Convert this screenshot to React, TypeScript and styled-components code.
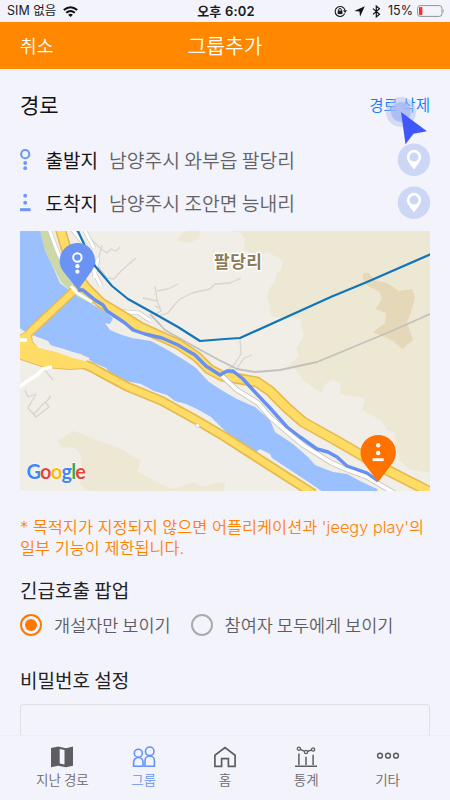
import React from "react";
import styled, { createGlobalStyle } from "styled-components";

const GlobalStyle = createGlobalStyle`
  * { box-sizing: border-box; }
  body { margin: 0; background: #f3f3fb; font-family: "Noto Sans CJK KR", "Noto Sans", sans-serif; }
  svg { display: block; flex: none; }
`;

const Screen = styled.div`
  position: relative;
  width: 450px;
  height: 800px;
  overflow: hidden;
  display: flex;
  flex-direction: column;
  background: #f3f3fb;
`;

const StatusBar = styled.div`
  height: 22px;
  flex: none;
  display: grid;
  grid-template-columns: 1fr auto 1fr;
  align-items: center;
  padding: 0 5px 0 7px;
  font-family: Inter, "Noto Sans CJK KR", sans-serif;
  font-size: 12.5px;
  line-height: 22px;
  color: #1b1b1f;
`;

const StatusGroup = styled.div<{ $end?: boolean; $gap: number }>`
  display: flex;
  align-items: center;
  justify-content: ${(p) => (p.$end ? "flex-end" : "flex-start")};
  gap: ${(p) => p.$gap}px;
`;

const Clock = styled.span`
  font-weight: 600;
  font-size: 13px;
  letter-spacing: 0.2px;
`;

const Header = styled.header`
  height: 47px;
  flex: none;
  display: grid;
  grid-template-columns: 1fr auto 1fr;
  align-items: center;
  padding: 0 20px 2px;
  background: #ff8800;
  color: #fff;
`;

const Cancel = styled.span`
  font-size: 18.2px;
  font-weight: 350;
  line-height: 24px;
`;

const Title = styled.h1`
  margin: 0;
  font-size: 20.4px;
  font-weight: 350;
  line-height: 24px;
`;

const Content = styled.main`
  flex: 1;
  min-height: 0;
  overflow: hidden;
  padding: 0 20px;
  display: flex;
  flex-direction: column;
`;

const SectionHead = styled.div`
  height: 69px;
  flex: none;
  display: flex;
  align-items: center;
  justify-content: space-between;
`;

const SectionTitle = styled.h2`
  margin: 0;
  font-size: 21px;
  font-weight: 400;
  line-height: 30px;
  color: #111;
`;

const DeleteLink = styled.span`
  font-size: 15.6px;
  font-weight: 350;
  line-height: 22px;
  padding-top: 1px;
  color: #0a7cff;
`;

const PlaceRow = styled.div`
  height: 43px;
  flex: none;
  display: flex;
  align-items: center;
`;

const PlaceIcon = styled.div`
  width: 25.5px;
`;

const PlaceKind = styled.span`
  width: 63.5px;
  font-size: 19px;
  line-height: 28px;
  color: #151515;
`;

const PlaceName = styled.span`
  flex: 1;
  font-size: 19.3px;
  font-weight: 350;
  line-height: 28px;
  color: #626266;
`;

const MapFrame = styled.div`
  margin-top: 7px;
  flex: none;
  width: 410px;
  height: 260px;
  overflow: hidden;
`;

const Note = styled.p`
  margin: 26px 0 0;
  font-family: Inter, "Noto Sans CJK KR", sans-serif;
  font-size: 16.35px;
  font-weight: 350;
  line-height: 21px;
  color: #ff8200;
  white-space: nowrap;
`;

const FieldTitle = styled.h3<{ $top: number }>`
  margin: ${(p) => p.$top}px 0 0;
  font-size: 19px;
  font-weight: 400;
  line-height: 30px;
  color: #222;
`;

const RadioRow = styled.div`
  display: flex;
  gap: 20px;
  margin-top: 7px;
  height: 30px;
  align-items: center;
`;

const RadioOption = styled.div`
  display: flex;
  align-items: center;
  gap: 12px;
  font-size: 17.5px;
  font-weight: 350;
  line-height: 26px;
  color: #5e5e62;
`;

const RadioMark = styled.span<{ $on?: boolean }>`
  width: 22px;
  height: 22px;
  border-radius: 50%;
  border: 2px solid ${(p) => (p.$on ? "#ff7800" : "#aaaaad")};
  display: grid;
  place-items: center;
  &::after {
    content: "";
    width: 12px;
    height: 12px;
    border-radius: 50%;
    background: ${(p) => (p.$on ? "#ff7800" : "transparent")};
  }
`;

const PasswordField = styled.div`
  margin-top: 9px;
  height: 48px;
  flex: none;
  border: 1px solid #dfdfe5;
  border-radius: 3px;
`;

const TabBar = styled.nav`
  height: 65px;
  flex: none;
  display: grid;
  grid-template-columns: repeat(5, 81.3px);
  justify-content: center;
  border-top: 1px solid #ededf3;
  background: #f3f3fb;
`;

const Tab = styled.div<{ $active?: boolean }>`
  display: flex;
  flex-direction: column;
  align-items: center;
  padding-top: 10px;
  gap: 1px;
  font-size: 13.5px;
  font-weight: 350;
  line-height: 20px;
  color: ${(p) => (p.$active ? "#6692f5" : "#6a6a6e")};
`;

const TapMarker = styled.svg`
  position: absolute;
  left: 385px;
  top: 96px;
  pointer-events: none;
`;

const WifiIcon = () => (
  <svg width="15" height="11" viewBox="0 0 15 11" fill="none" stroke="#111" strokeWidth="2">
    <path d="M.8 4.1Q7.5-1.7 14.2 4.1" />
    <path d="M3.2 6.8q4.3-3.7 8.6 0" />
    <path d="M5.1 8.7L7.5 11l2.4-2.3Q7.5 6.9 5.1 8.7z" fill="#111" stroke="none" />
  </svg>
);

const RotationLockIcon = () => (
  <svg width="13" height="13" viewBox="0 0 13 13" fill="none" stroke="#1b1b1f">
    <path d="M10.7 8.6A5 5 0 1 1 11 5.2" strokeWidth="1.1" />
    <path d="M9 5.3h4L11.2 8z" fill="#1b1b1f" stroke="none" />
    <rect x="3.7" y="5.7" width="4.7" height="3.4" fill="#1b1b1f" stroke="none" />
    <path d="M4.7 6V4.8a1.35 1.35 0 0 1 2.7 0V6" />
  </svg>
);

const LocationIcon = () => (
  <svg width="11" height="11" viewBox="0 0 11 11">
    <path d="M10.8.3L6 10.8 5.5 5.6.3 5.1z" fill="#111" />
  </svg>
);

const BluetoothIcon = () => (
  <svg width="9" height="13" viewBox="0 0 9 13" fill="none" stroke="#111" strokeWidth="1.2">
    <path d="M1 3.6l6.5 5.6-3.2 2.7V1.1l3.2 2.7L1 9.4" />
  </svg>
);

const BatteryIcon = () => (
  <svg width="28" height="12" viewBox="0 0 28 12">
    <rect x=".6" y=".6" width="24.4" height="10.8" rx="2.6" fill="none" stroke="#929297" strokeWidth="1" />
    <rect x="2" y="2" width="3.4" height="8" rx=".8" fill="#ff2d2d" />
    <path d="M26.2 4q1.5 2 0 4z" fill="#929297" />
  </svg>
);

const StartIcon = () => (
  <svg width="11" height="22" viewBox="0 0 11 22">
    <circle cx="5.2" cy="5.2" r="4.1" fill="none" stroke="#6b95f6" strokeWidth="2" />
    <circle cx="5.2" cy="14" r="1.9" fill="#6b95f6" />
    <circle cx="5.2" cy="19.2" r="1.9" fill="#6b95f6" />
  </svg>
);

const EndIcon = () => (
  <svg width="11" height="20" viewBox="0 0 11 20">
    <circle cx="5.2" cy="2.7" r="1.9" fill="#6b95f6" />
    <circle cx="5.2" cy="9.7" r="1.9" fill="#6b95f6" />
    <rect x="0" y="15.2" width="10.6" height="3" fill="#6b95f6" />
  </svg>
);

const PlacePin = () => (
  <svg width="33" height="33" viewBox="0 0 33 33">
    <circle cx="16.9" cy="16.8" r="16.2" fill="#ccd6f5" />
    <path
      d="M17 26.6C14.3 22.4 9.8 18.3 9.8 14a7.2 7.2 0 0 1 14.4 0c0 4.3-4.5 8.4-7.2 12.6zM17 9.6a4.5 4.5 0 1 0 0 9 4.5 4.5 0 0 0 0-9z"
      fill="#fff"
      fillRule="evenodd"
    />
  </svg>
);

const southRoad = "M12 341L38 355 70 361Q88 364 98 371L128 387 162 401 198 421 225 437 270 466 314 494";
const northRoad =
  "M60 228L65 245 73 270 86 288 101 303 121 315 140 327 160 336 178 344 197 357 209 369 222 376 240 379 257 382 270 391 287 408 303 422 337 441 387 470 432 493";
const bridge = "M78 287L29 333";
const serviceRoad =
  "M222 376L237 390 258 403 270 417 285 430 303 445 330 462 343 468 367 477 377 483 396 494";
const route =
  "M78 290L83 290 95 300 103 305 107 311 125 323 133 330 145 334 162 338 178 345 195 355 206 366 220 375 227 371 233 371 243 379 253 390 270 408 287 427 300 437 317 449 328 452 337 457 347 466 367 473 378 481";
const junction = "M18 337L30 330 32 342 38 348 58 353 84 362 84 368 70 369 45 367 18 358z";

const RouteMap = () => (
  <svg width="410" height="260" viewBox="20 231 410 260" fill="none" strokeLinejoin="round">
    <rect x="20" y="231" width="410" height="260" fill="#f0eee7" />
    <path
      fill="#ece8d4"
      d="M230 231l11 2 4 6-1 11 13 6 10-4 16 8-1 8-6 7-1 7-6 7-2 9 3 7-1 6 4 6 29 2-1 9 3 8-8 13 3 7-11 10 7 3 8 11 18 13 4-9 8-4 8 3-1 11 25 4-3 12 20 11 5 9 8 3 0 12 5 16 10 9 22 3V231z"
    />
    <path fill="#ece8d4" d="M177 241l5-8 6-2h12l-1 7-9 5zM73 431l-16 10 5 6 13 1 6 7 1 22-2 8 10 6h134l1-9-8 1-15 4-8-5-22 7-14-6-21-12 4-10-23-14-20-6-13-6z" />
    <path
      fill="#e5d8b8"
      d="M364 273l-2 4 6 9 12 6 2 6-6 11 10 4-1 10-12 9 20 9 9 8 11-9-6-18 5-13 3-12-3-8-13 2-12-8-13-3-5-7z"
    />
    <path fill="#ccd8a8" d="M38 229l7 23 7 13 9 17 25 25 8-4-19-20-15-23-10-31z" />
    <path
      fill="#9bc0ff"
      d="M20 231h20l5 20 7 14 8 18 18 14 12 6 14 8 9 7-3 6-5-1 5 7 12 5 10 3 19 3 15 8 15 9 14 9 14 15 14 9 14 8 18 8 15 13 5 12 18 12 15 13 7 8 18 7 14 2 13 7 17 8 2 6h-51l-8-5-13-9-20-13-15-10-2-4-10-5-4 3-26-16-8-8-11-11-14-8-11-5-11-3-8-6-13-4-13-7-15-3-14-6-6-7-12-5-13-9-9-2-5 4-7-6-8-3-4-6-13-5-13-6-9-9-6-2z"
    />
    <g stroke="#d8d5cf" strokeWidth="1.3">
      <path d="M92 240l8 8 7 5 4-4 5 2 4-4M102 245l-5 20 10 13 7 1 7-8 15-13M155 286l2 14 4 11-7 4M157 291l11-2 10-5M143 298l14 3M158 316l10-3 7-9 5-5 12-6 18-4 5-5 15-1 11-5M161 309l-6-3" />
      <path d="M240 339l1 15-7 11-6 4M236 370l8-12 8-3M25 390l3 7 8-3-8 14 8 9 13-10-4-5-11 12M46 402l5-6M44 369l9 11" />
    </g>
    <path d="M150 314l15 16 30 17 24 13 18 9 18 3 25-2 37-8 70-29 43-19" stroke="#c4c0bd" strokeWidth="1.8" />
    <path d="M71 228l14 17 9 27 7 14M85 231l9 17M94 278l4-20M72 280l-14-27-9-24M119 311l20 2 12 8" stroke="#d2cec7" strokeWidth="4.6" />
    <path d="M71 228l14 17 9 27 7 14M85 231l9 17M94 278l4-20M72 280l-14-27-9-24M119 311l20 2 12 8" stroke="#fff" strokeWidth="3" />
    <path d="M77 229l7 15 11 22 17 20 16 13 27 15 23 13 22 14 25-2 15-1 93-42 5-2 29-12 64-28" stroke="#1275ba" strokeWidth="2.2" />
    <g stroke="#e6ba51">
      <path d={bridge} strokeWidth="9" />
      <path d={southRoad} strokeWidth="10" />
      <path d={northRoad} strokeWidth="11" />
      <path d={junction} strokeWidth="2" />
    </g>
    <path d="M32 340L64 349 90 358 84 363 58 353 38 348z" fill="#f0eee7" />
    <g stroke="#ffdc66">
      <path d={bridge} strokeWidth="6" />
      <path d={southRoad} strokeWidth="6.5" />
      <path d={northRoad} strokeWidth="7.8" />
      <path d={junction} fill="#ffdc66" stroke="none" />
    </g>
    <path d="M15 340l12 0M15 390l11-8 11-7 6-6 9-2" stroke="#fff" strokeWidth="3.5" />
    <path d={serviceRoad} stroke="#c9c5bf" strokeWidth="5.5" />
    <path d={serviceRoad} stroke="#fff" strokeWidth="3.7" />
    <path d="M71 286l6 7 15 9" stroke="#fff" strokeWidth="3" />
    <path d={route} stroke="#6690f2" strokeWidth="3.4" />
    <circle cx="197.5" cy="425.5" r="2" fill="#fff" stroke="#d5c9ad" strokeWidth=".8" />
    <text
      x="214"
      y="268"
      fontSize="17"
      fontWeight="700"
      fill="#8c7b5b"
      stroke="#fff"
      strokeWidth="3"
      paintOrder="stroke"
      textLength="48"
      fontFamily="Noto Sans CJK KR, sans-serif"
    >
      팔당리
    </text>
    <path d="M78 290L64.2 272.5A17.7 17.7 0 1 1 91.4 271.5z" fill="#6b93f4" />
    <circle cx="77.4" cy="257.5" r="4.2" stroke="#fff" strokeWidth="2" />
    <circle cx="77.4" cy="266.2" r="2.1" fill="#fff" />
    <circle cx="77.4" cy="271.7" r="2.1" fill="#fff" />
    <path d="M378.2 482L364 463.2A17.7 17.7 0 1 1 392.4 463.2z" fill="#ff7200" />
    <circle cx="378.2" cy="445.2" r="2.2" fill="#fff" />
    <circle cx="378.2" cy="453" r="2.2" fill="#fff" />
    <rect x="372.7" y="458.3" width="11" height="2.8" fill="#fff" />
    <text
      x="26.5"
      y="479"
      fontSize="20"
      fontWeight="700"
      textLength="59.5"
      stroke="#fff"
      strokeWidth="1"
      paintOrder="stroke"
      fontFamily="Lato, sans-serif"
    >
      <tspan fill="#4285f4">G</tspan>
      <tspan fill="#ea4335">o</tspan>
      <tspan fill="#fbbc05">o</tspan>
      <tspan fill="#4285f4">g</tspan>
      <tspan fill="#34a853">l</tspan>
      <tspan fill="#ea4335">e</tspan>
    </text>
  </svg>
);

const MapTabIcon = () => (
  <svg width="24" height="22" viewBox="0 0 24 22">
    <path d="M1 2.1L8.2.5 16 2.2 23 .5v19.3l-7 1.5-7.8-1.6L1 21.3z" fill="#5e5e62" />
    <path d="M9.7 3.1l4.8 1v14.5l-4.8-1z" fill="#f3f3fb" />
  </svg>
);

const GroupTabIcon = () => (
  <svg width="24" height="22" viewBox="0 0 24 22" fill="none" stroke="#6692f5" strokeWidth="1.6">
    <circle cx="6.3" cy="7.2" r="4" />
    <circle cx="17.7" cy="5.3" r="4.3" />
    <path d="M1.6 20.3v-4.1a4.7 4.7 0 0 1 9.4 0v4.1zM13 20.3v-5.6a4.7 4.7 0 0 1 9.4 0v5.6z" />
  </svg>
);

const HomeTabIcon = () => (
  <svg width="24" height="22" viewBox="0 0 24 22" fill="none" stroke="#5e5e62" strokeWidth="1.7">
    <path d="M1.9 20.3V9.2L12 1.5l10.1 7.7v11.1h-6.7v-7.6H8.6v7.6z" />
  </svg>
);

const StatsTabIcon = () => (
  <svg width="24" height="22" viewBox="0 0 24 22" fill="none" stroke="#5e5e62" strokeWidth="1.5">
    <path d="M1 20.3h22M4.9 19V7.6M12 19v-8.3M19.1 19V8.8M6.5 3.4l4 2M13.5 5.5l4-1.6" />
    <circle cx="4.9" cy="2.7" r="1.6" strokeWidth="1.3" />
    <circle cx="12" cy="6" r="1.6" strokeWidth="1.3" />
    <circle cx="19.1" cy="3.5" r="1.6" strokeWidth="1.3" />
  </svg>
);

const MoreTabIcon = () => (
  <svg width="24" height="22" viewBox="0 0 24 22" fill="none" stroke="#5e5e62" strokeWidth="1.5">
    <circle cx="4" cy="9.7" r="2.4" />
    <circle cx="12" cy="9.7" r="2.4" />
    <circle cx="20" cy="9.7" r="2.4" />
  </svg>
);

const tabs = [
  { label: "지난 경로", Icon: MapTabIcon },
  { label: "그룹", Icon: GroupTabIcon, active: true },
  { label: "홈", Icon: HomeTabIcon },
  { label: "통계", Icon: StatsTabIcon },
  { label: "기타", Icon: MoreTabIcon },
];

export default function App() {
  return (
    <Screen>
      <GlobalStyle />
      <StatusBar>
        <StatusGroup $gap={7}>
          <span>SIM 없음</span>
          <WifiIcon />
        </StatusGroup>
        <Clock>오후 6:02</Clock>
        <StatusGroup $end $gap={7}>
          <RotationLockIcon />
          <LocationIcon />
          <BluetoothIcon />
          <StatusGroup $gap={4}>
            <span>15%</span>
            <BatteryIcon />
          </StatusGroup>
        </StatusGroup>
      </StatusBar>
      <Header>
        <Cancel>취소</Cancel>
        <Title>그룹추가</Title>
      </Header>
      <Content>
        <SectionHead>
          <SectionTitle>경로</SectionTitle>
          <DeleteLink>경로 삭제</DeleteLink>
        </SectionHead>
        <PlaceRow>
          <PlaceIcon>
            <StartIcon />
          </PlaceIcon>
          <PlaceKind>출발지</PlaceKind>
          <PlaceName>남양주시 와부읍 팔당리</PlaceName>
          <PlacePin />
        </PlaceRow>
        <PlaceRow>
          <PlaceIcon>
            <EndIcon />
          </PlaceIcon>
          <PlaceKind>도착지</PlaceKind>
          <PlaceName>남양주시 조안면 능내리</PlaceName>
          <PlacePin />
        </PlaceRow>
        <MapFrame>
          <RouteMap />
        </MapFrame>
        <Note>
          * 목적지가 지정되지 않으면 어플리케이션과 'jeegy play'의
          <br />
          일부 기능이 제한됩니다.
        </Note>
        <FieldTitle $top={16}>긴급호출 팝업</FieldTitle>
        <RadioRow>
          <RadioOption>
            <RadioMark $on />
            개설자만 보이기
          </RadioOption>
          <RadioOption>
            <RadioMark />
            참여자 모두에게 보이기
          </RadioOption>
        </RadioRow>
        <FieldTitle $top={27}>비밀번호 설정</FieldTitle>
        <PasswordField />
      </Content>
      <TabBar>
        {tabs.map(({ label, Icon, active }) => (
          <Tab key={label} $active={active}>
            <Icon />
            <span>{label}</span>
          </Tab>
        ))}
      </TabBar>
      <TapMarker width="44" height="50" viewBox="385 96 44 50">
        <circle cx="401" cy="112" r="15" fill="#b4c2ef" fillOpacity=".5" />
        <circle cx="401" cy="112" r="10" fill="#a4b5f2" fillOpacity=".75" />
        <path d="M401 112l26 19.3-13.5 2.5-8 10.5z" fill="#4057fa" />
      </TapMarker>
    </Screen>
  );
}
